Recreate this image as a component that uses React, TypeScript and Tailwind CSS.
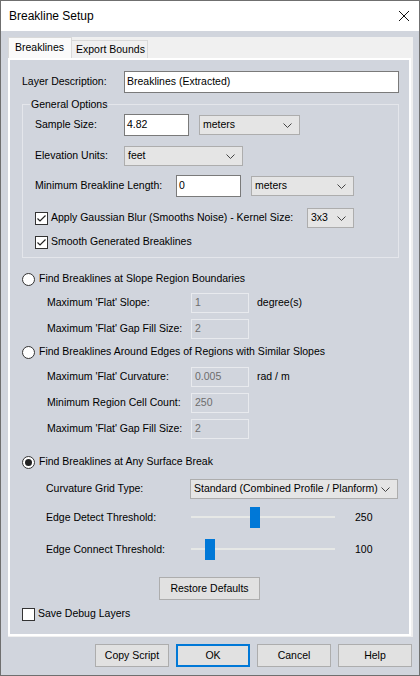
import React from "react";

const PANEL = "bg-[#d1d5dd]";

function Chevron() {
  return (
    <svg width="9" height="5" viewBox="0 0 9 5" className="shrink-0">
      <path d="M0.5 0.5 L4.5 4.5 L8.5 0.5" fill="none" stroke="#444" strokeWidth="1" />
    </svg>
  );
}

function Select({ value, className }: { value: string; className: string }) {
  return (
    <div className={`flex h-[20px] items-center justify-between border border-[#adadad] bg-[#e5e5e5] pl-[3px] pr-[7px] ${className}`}>
      <span className="whitespace-nowrap">{value}</span>
      <Chevron />
    </div>
  );
}

function TextBox({ value, className }: { value: string; className: string }) {
  return (
    <div className={`h-[22px] border border-[#7a7a7a] bg-white pl-[2px] pt-[2px] leading-[14px] ${className}`}>
      {value}
    </div>
  );
}

function Disabled({ value }: { value: string }) {
  return (
    <div className="h-[20px] w-[58px] border border-[#e8eaee] pl-[3px] pt-[1px] leading-[15px] text-[#6d6d6d]">
      {value}
    </div>
  );
}

function CheckBox({ checked, label }: { checked?: boolean; label: string }) {
  return (
    <div className="flex items-center gap-[3px]">
      <div className="flex h-[13px] w-[13px] items-center justify-center border border-[#333] bg-white">
        {checked && (
          <svg width="11" height="11" viewBox="0 0 11 11">
            <path d="M1.5 5.5 L4 8 L9.5 2.5" fill="none" stroke="#222" strokeWidth="1.2" />
          </svg>
        )}
      </div>
      <span className="whitespace-nowrap">{label}</span>
    </div>
  );
}

function Radio({ checked, label }: { checked?: boolean; label: string }) {
  return (
    <div className="flex h-[16px] items-center gap-[4px] pl-[12px]">
      <div className="flex h-[13px] w-[13px] items-center justify-center rounded-full border border-[#333] bg-white">
        {checked && <div className="h-[7px] w-[7px] rounded-full bg-[#222]" />}
      </div>
      <span className="whitespace-nowrap">{label}</span>
    </div>
  );
}

function SubRow({ label, value, unit, className }: { label: string; value: string; unit?: string; className: string }) {
  return (
    <div className={`flex h-[20px] items-center pl-[37px] ${className}`}>
      <span className="w-[144px] whitespace-nowrap">{label}</span>
      <Disabled value={value} />
      {unit && <span className="ml-[8px]">{unit}</span>}
    </div>
  );
}

function Slider({ label, offset, value, className }: { label: string; offset: number; value: string; className: string }) {
  return (
    <div className={`flex h-[21px] items-center pl-[36px] ${className}`}>
      <span className="w-[145px] whitespace-nowrap">{label}</span>
      <div className="relative h-[21px] w-[144px]">
        <div className="absolute left-0 right-0 top-[9px] h-[2px] bg-[#e6e8e6]" />
        <div className="absolute top-0 h-[21px] w-[10px] bg-[#0078d7]" style={{ left: offset }} />
      </div>
      <span className="ml-[20px]">{value}</span>
    </div>
  );
}

function Button({ label, primary, className }: { label: string; primary?: boolean; className: string }) {
  return (
    <div
      className={`flex h-[23px] items-center justify-center bg-[#e1e1e1] ${
        primary ? "border-2 border-[#0078d7]" : "border border-[#adadad]"
      } ${className}`}
    >
      {label}
    </div>
  );
}

export default function App() {
  return (
    <div className={`h-[676px] w-[420px] overflow-hidden border border-[#6f6f6f] ${PANEL} font-['Liberation_Sans',Arial,sans-serif] text-[10.5px] text-black`}>
      {/* title bar */}
      <div className="flex h-[30px] items-center justify-between bg-white pl-[8px] pr-[10px]">
        <span className="text-[12px]">Breakline Setup</span>
        <svg width="10" height="10" viewBox="0 0 10 10">
          <path d="M0 0 L10 10 M10 0 L0 10" stroke="#111" strokeWidth="1" />
        </svg>
      </div>

      {/* tab control */}
      <div className="ml-[7px] mt-[6px] h-[600px] w-[405px] bg-[#f0f0f0]">
        <div className="flex h-[21px] items-end">
          <div className="flex h-[21px] w-[64px] items-center whitespace-nowrap border border-b-0 border-[#d9d9d9] bg-[#fafafa] pl-[6px]">
            Breaklines
          </div>
          <div className="flex h-[18px] w-[76px] items-center whitespace-nowrap border border-b-0 border-l-0 border-[#d9d9d9] bg-[#f0f0f0] pl-[4px]">
            Export Bounds
          </div>
        </div>

        <div className={`h-[578px] w-[403px] border-2 border-white ${PANEL}`}>
          {/* layer description */}
          <div className="mt-[11px] flex h-[22px] items-center pl-[12px]">
            <span className="w-[102px]">Layer Description:</span>
            <TextBox value="Breaklines (Extracted)" className="w-[275px]" />
          </div>

          {/* general options */}
          <fieldset className="ml-[12px] mt-[4px] w-[377px] border border-[#e4e6eb] pb-[4px]">
            <legend className="ml-[7px] px-[1px] leading-[14px]">General Options</legend>
            <div className="mt-[3px] flex h-[22px] items-center pl-[12px]">
              <span className="w-[89px]">Sample Size:</span>
              <TextBox value="4.82" className="w-[65px]" />
              <Select value="meters" className="ml-[10px] w-[101px]" />
            </div>
            <div className="mt-[9px] flex h-[22px] items-center pl-[12px]">
              <span className="w-[89px]">Elevation Units:</span>
              <Select value="feet" className="w-[119px]" />
            </div>
            <div className="mt-[8px] flex h-[22px] items-center pl-[12px]">
              <span className="w-[141px]">Minimum Breakline Length:</span>
              <TextBox value="0" className="w-[65px]" />
              <Select value="meters" className="ml-[10px] w-[103px]" />
            </div>
            <div className="mt-[10px] flex h-[22px] items-center pl-[12px]">
              <div className="w-[272px]">
                <CheckBox checked label="Apply Gaussian Blur (Smooths Noise) - Kernel Size:" />
              </div>
              <Select value="3x3" className="w-[47px]" />
            </div>
            <div className="mt-[2px] flex h-[22px] items-center pl-[12px]">
              <CheckBox checked label="Smooth Generated Breaklines" />
            </div>
          </fieldset>

          {/* slope region boundaries */}
          <div className="mt-[13px]">
            <Radio label="Find Breaklines at Slope Region Boundaries" />
          </div>
          <SubRow label="Maximum 'Flat' Slope:" value="1" unit="degree(s)" className="mt-[6px]" />
          <SubRow label="Maximum 'Flat' Gap Fill Size:" value="2" className="mt-[6px]" />

          <div className="mt-[5px]">
            <Radio label="Find Breaklines Around Edges of Regions with Similar Slopes" />
          </div>
          <SubRow label="Maximum 'Flat' Curvature:" value="0.005" unit="rad / m" className="mt-[7px]" />
          <SubRow label="Minimum Region Cell Count:" value="250" className="mt-[6px]" />
          <SubRow label="Maximum 'Flat' Gap Fill Size:" value="2" className="mt-[6px]" />

          <div className="mt-[15px]">
            <Radio checked label="Find Breaklines at Any Surface Break" />
          </div>
          <div className="mt-[9px] flex h-[20px] items-center pl-[36px]">
            <span className="w-[144px]">Curvature Grid Type:</span>
            <Select value="Standard (Combined Profile / Planform)" className="w-[208px]" />
          </div>
          <Slider label="Edge Detect Threshold:" offset={59} value="250" className="mt-[8px]" />
          <Slider label="Edge Connect Threshold:" offset={14} value="100" className="mt-[11px]" />

          <div className="mt-[17px] flex justify-center">
            <Button label="Restore Defaults" className="w-[101px]" />
          </div>
          <div className="mt-[6px] flex h-[16px] items-center pl-[12px]">
            <CheckBox label="Save Debug Layers" />
          </div>
        </div>
      </div>

      {/* dialog buttons */}
      <div className="mt-[7px] flex justify-end gap-[7px] pr-[7px]">
        <Button label="Copy Script" className="w-[74px]" />
        <Button label="OK" primary className="w-[74px]" />
        <Button label="Cancel" className="w-[74px]" />
        <Button label="Help" className="w-[74px]" />
      </div>
    </div>
  );
}
